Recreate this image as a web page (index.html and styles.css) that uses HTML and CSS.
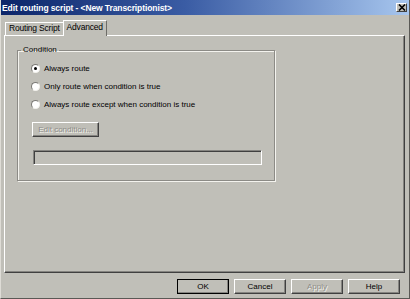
FILE: index.html
```html
<!DOCTYPE html>
<html lang="en">
<head>
  <meta charset="UTF-8" />
  <title>Edit routing script</title>
  <link rel="stylesheet" href="styles.css">
</head>
<body>

<div class="window">
  <div class="titlebar">
    <span class="title">Edit routing script - &lt;New Transcriptionist&gt;</span>
    <span class="close-btn">
      <svg width="8" height="7" viewBox="0 0 8 7"><path d="M1 0.5 L7 6.5 M7 0.5 L1 6.5" stroke="#000" stroke-width="1.6"/></svg>
    </span>
  </div>

  <div class="tabs">
    <div class="tab">Routing Script</div>
    <div class="tab active">Advanced</div>
  </div>

  <div class="panel">
    <fieldset class="group">
      <legend>Condition</legend>
      <label class="option"><span class="radio checked"></span>Always route</label>
      <label class="option"><span class="radio"></span>Only route when condition is true</label>
      <label class="option"><span class="radio"></span>Always route except when condition is true</label>
      <button class="btn disabled edit-btn">Edit condition...</button>
      <div class="field"></div>
    </fieldset>
  </div>

  <div class="buttons">
    <button class="btn default">OK</button>
    <button class="btn">Cancel</button>
    <button class="btn disabled">Apply</button>
    <button class="btn">Help</button>
  </div>
</div>

</body>
</html>
```

FILE: styles.css
```css
* {
  box-sizing: border-box;
}

body {
  margin: 0;
  padding: 0;
  font-family: 'Liberation Sans', Arial, sans-serif;
  font-size: 8px;
  color: #000;
  background: #c0bfb8;
}

.window {
  width: 410px;
  height: 299px;
  display: flex;
  flex-direction: column;
  background: #c0bfb8;
  border: 1px solid;
  border-color: #dedcd6 #5a5955 #5a5955 #dedcd6;
  border-top: none;
}

.titlebar {
  height: 15px;
  display: flex;
  align-items: center;
  justify-content: space-between;
  padding: 0 2px 0 1px;
  background: linear-gradient(to right, #0c2569, #3a5ca4 45%, #a7c6ee);
  color: #fff;
}

.title {
  font-weight: 700;
  font-size: 8.5px;
  letter-spacing: -0.1px;
}

.close-btn {
  width: 11px;
  height: 9px;
  display: flex;
  align-items: center;
  justify-content: center;
  background: #c0bfb8;
  border: 1px solid;
  border-color: #fff #404040 #404040 #fff;
}

.tabs {
  display: flex;
  align-items: flex-end;
  height: 20px;
  padding-left: 4px;
  position: relative;
  z-index: 1;
}

.tab {
  height: 13px;
  padding: 0 3px;
  line-height: 11px;
  font-size: 8.5px;
  letter-spacing: -0.2px;
  border: 1px solid;
  border-bottom: none;
  border-color: #fff #6e6d68 transparent #fff;
}

.tab.active {
  height: 16px;
  line-height: 13px;
  padding: 0 3px;
  margin-left: -1px;
  background: #c0bfb8;
  margin-bottom: -1px;
}

.panel {
  height: 238px;
  margin: 0 4px 0 3px;
  padding: 9px 0 0 12px;
  border: 1px solid;
  border-color: #fff #404040 #404040 #fff;
  box-shadow: inset -1px -1px #858480;
}

.group {
  width: 258px;
  margin: 0;
  padding: 4px 0 15px 14px;
  border: 1px solid #8c8b86;
  box-shadow: inset 1px 1px #f4f3ee, 1px 1px #f4f3ee;
}

.group legend {
  padding: 0 2px;
  margin-left: -11px;
  line-height: 10px;
}

.option {
  display: flex;
  align-items: center;
  height: 18px;
  gap: 4px;
  margin-left: -1px;
}

.radio {
  width: 9px;
  height: 9px;
  border-radius: 50%;
  border: 1px solid;
  border-color: #7b7a75 #f2f1ec #f2f1ec #7b7a75;
  background: #fff;
  display: flex;
  align-items: center;
  justify-content: center;
}

.radio.checked::after {
  content: "";
  width: 3px;
  height: 3px;
  border-radius: 50%;
  background: #000;
}

.btn {
  font-family: 'Liberation Sans', Arial, sans-serif;
  font-size: 8px;
  height: 15px;
  width: 52px;
  padding: 0;
  background: #c0bfb8;
  border: 1px solid;
  border-color: #fff #404040 #404040 #fff;
  box-shadow: inset -1px -1px #858480;
  color: #000;
}

.btn.default {
  outline: 1px solid #000;
  outline-offset: -1px;
}

.btn.disabled {
  color: #8e8d88;
  text-shadow: 1px 1px #f4f3ee;
}

.edit-btn {
  display: block;
  width: 67px;
  margin-top: 9px;
}

.field {
  width: 229px;
  height: 15px;
  margin-top: 13px;
  margin-left: 1px;
  border: 1px solid;
  border-color: #858480 #fff #fff #858480;
  box-shadow: inset 1px 1px #404040;
}

.buttons {
  display: flex;
  justify-content: flex-end;
  gap: 5px;
  margin-top: 6px;
  padding-right: 9px;
}
```
